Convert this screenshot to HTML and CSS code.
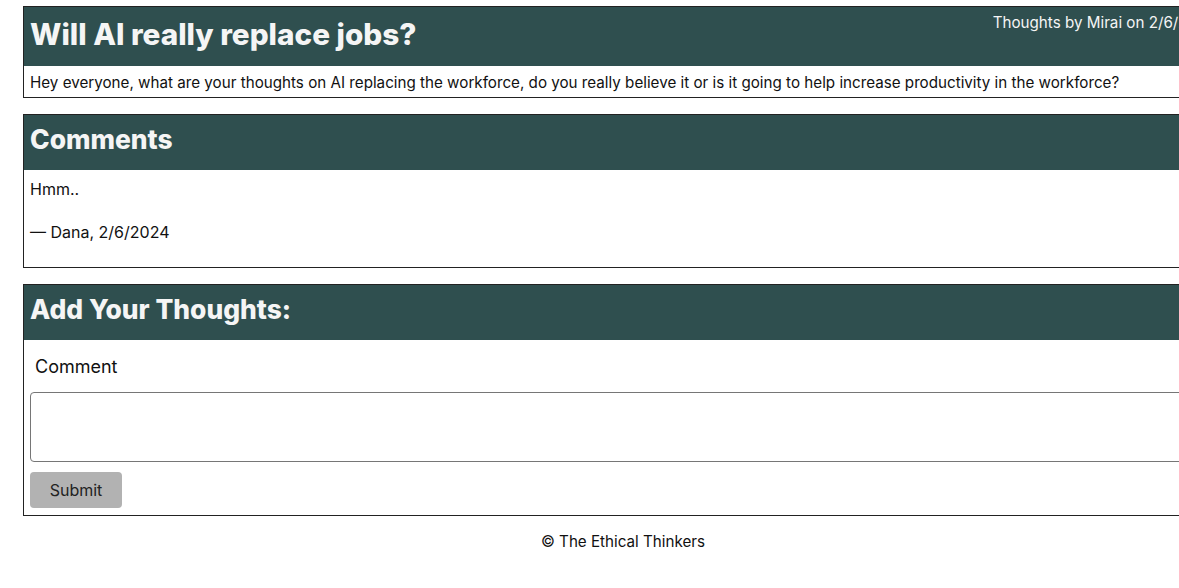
FILE: index.html
```html
<!DOCTYPE html>
<html lang="en">
<head>
<meta charset="utf-8">
<title>Will AI really replace jobs?</title>
<link rel="stylesheet" href="styles.css">
</head>
<body>
<div class="clip">
<main class="page">
  <section class="box">
    <div class="box-head post-head">
      <h1 class="title">Will AI really replace jobs?</h1>
      <span class="meta">Thoughts by Mirai on 2/6/2024</span>
    </div>
    <p class="post-body">Hey everyone, what are your thoughts on AI replacing the workforce, do you really believe it or is it going to help increase productivity in the workforce?</p>
  </section>

  <section class="box">
    <div class="box-head">
      <h2 class="section-title">Comments</h2>
    </div>
    <div class="comment">
      <p class="comment-text">Hmm..</p>
      <p class="comment-author">— Dana, 2/6/2024</p>
    </div>
  </section>

  <section class="box">
    <div class="box-head">
      <h2 class="section-title">Add Your Thoughts:</h2>
    </div>
    <form class="form">
      <label class="label" for="c">Comment</label>
      <textarea id="c" class="textarea"></textarea>
      <button type="button" class="submit">Submit</button>
    </form>
  </section>

  <footer class="footer">© The Ethical Thinkers</footer>
</main>
</div>
</body>
</html>
```

FILE: styles.css
```css
html {
  overflow: hidden;
}
body {
  margin: 6px 0 8px 8px;
  font-family: Inter, "Noto Sans", sans-serif;
  color: #111;
  background: #fff;
}
.clip {
  overflow: hidden;
}
.page {
  margin-left: 15px;
  width: 1200px;
  display: flex;
  flex-direction: column;
  gap: 16px;
}
.box {
  border: 1px solid #222;
}
.box-head {
  background: #2f4f4f;
  color: #f5f5f5;
  display: flex;
  justify-content: space-between;
  align-items: flex-start;
}
.title {
  margin: 0;
  font-size: 29.7px;
  font-weight: 800;
  line-height: 36px;
  padding: 9px 6px 14px;
}
.meta {
  font-size: 15.2px;
  line-height: 20px;
  padding: 6px 6px 0 0;
}
.post-body {
  margin: 0;
  font-size: 15.2px;
  line-height: 19px;
  padding: 7px 6px 5px;
}
.section-title {
  margin: 0;
  font-size: 26.4px;
  font-weight: 800;
  line-height: 34px;
  padding: 7px 6px 14px;
}
.comment {
  padding: 9px 6px 25px;
  font-size: 16px;
  line-height: 20px;
}
.comment-text {
  margin: 0 0 23px;
}
.comment-author {
  margin: 0;
}
.form {
  display: flex;
  flex-direction: column;
  align-items: flex-start;
  padding: 17px 0 7px 6px;
}
.label {
  font-size: 18px;
  line-height: 20px;
  padding-left: 5px;
  margin-bottom: 15px;
}
.textarea {
  box-sizing: border-box;
  width: 1194px;
  height: 70px;
  border: 1px solid #767676;
  border-radius: 4px;
  margin: 0 0 10px;
  padding: 4px;
  resize: none;
  font-family: inherit;
}
.submit {
  width: 92px;
  height: 36px;
  border: none;
  border-radius: 4px;
  background: #b2b2b2;
  color: #222;
  font-family: inherit;
  font-size: 16px;
}
.footer {
  text-align: center;
  font-size: 15.2px;
  line-height: 20px;
}
```
